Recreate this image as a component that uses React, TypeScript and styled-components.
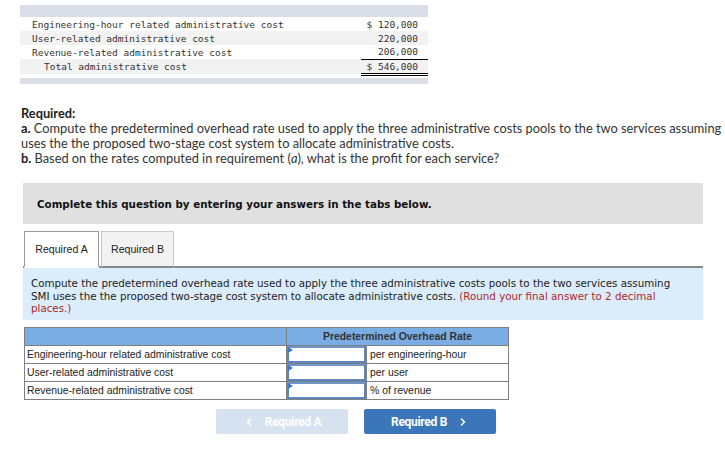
import { createGlobalStyle, styled } from "styled-components";
import { ChevronLeft, ChevronRight } from "lucide-react";

const GlobalStyle = createGlobalStyle`
  html, body {
    margin: 0;
    padding: 0;
    overflow: hidden;
    background: #fff;
  }
`;

const Page = styled.div`
  width: 725px;
  height: 459px;
  overflow: hidden;
  padding-top: 5px;
  box-sizing: border-box;
`;

const CostTable = styled.table`
  margin-left: 20px;
  width: 408px;
  border-collapse: collapse;
  font-family: "DejaVu Sans Mono", "Liberation Mono", monospace;
  font-size: 9.5px;
  color: #333;
`;

const BandRow = styled.tr<{ $h: number }>`
  height: ${(p) => p.$h}px;
  td {
    background: #d9dde6;
    padding: 0;
  }
`;

const SpacerRow = styled.tr`
  height: 4px;
  td {
    padding: 0;
  }
`;

const CostRow = styled.tr<{ $shade?: boolean; $h?: number }>`
  height: ${(p) => p.$h ?? 14}px;
  td {
    background: ${(p) => (p.$shade ? "#f2f2f2" : "#fff")};
    padding: 0;
    white-space: pre;
  }
`;

const LabelCell = styled.td<{ $indent?: boolean }>`
  padding-left: ${(p) => (p.$indent ? 24 : 12)}px !important;
`;

const AmountCell = styled.td<{ $line?: "single" | "double" }>`
  width: 67px;
  text-align: right;
  padding-right: 10px !important;
  box-sizing: border-box;
  border-bottom: ${(p) =>
    p.$line === "single" ? "1px solid #000" : p.$line === "double" ? "3px double #000" : "none"};
`;

const Required = styled.div`
  margin: 22px 0 0 21px;
  font-family: Lato, "Open Sans", sans-serif;
  font-size: 12.8px;
  line-height: 15px;
  color: #333;
`;

const Line = styled.div`
  white-space: nowrap;
`;

const Bold = styled.b`
  font-weight: 700;
  color: #222;
`;

const Section = styled.div`
  margin: 17px 0 0 23px;
  width: 680px;
`;

const Notice = styled.div`
  background: #e0e0e0;
  height: 41px;
  display: flex;
  align-items: center;
  padding-left: 14px;
  font-family: "DejaVu Sans", Verdana, sans-serif;
  font-weight: 700;
  font-size: 10.3px;
  color: #111;
`;

const Tabs = styled.div`
  display: flex;
  gap: 2px;
  margin-top: 7px;
  border-bottom: 2px solid #8a8a8a;
  padding-left: 1px;
`;

const Tab = styled.div<{ $active?: boolean }>`
  width: ${(p) => (p.$active ? 75 : 73)}px;
  height: 37px;
  margin-bottom: -2px;
  box-sizing: border-box;
  display: flex;
  align-items: center;
  justify-content: center;
  font-family: "Liberation Sans", Arial, sans-serif;
  font-size: 10.6px;
  color: #222;
  background: ${(p) => (p.$active ? "#fff" : "#f2f2f2")};
  border: 1px solid ${(p) => (p.$active ? "#9a9a9a" : "#c8c8c8")};
  border-bottom: ${(p) => (p.$active ? "2px solid #fff" : "2px solid #8a8a8a")};
`;

const Info = styled.div`
  background: #dbedfa;
  padding: 9px 20px 7px 8px;
  font-family: "DejaVu Sans", Verdana, sans-serif;
  font-size: 10.3px;
  line-height: 12.5px;
  color: #222;
  height: 52px;
  box-sizing: border-box;
`;

const Hint = styled.span`
  color: #b0262c;
`;

const RateTable = styled.table`
  margin: 7px 0 0 1px;
  width: 485px;
  border-collapse: collapse;
  font-family: "Liberation Sans", Arial, sans-serif;
  font-size: 10.4px;
  color: #222;
  td,
  th {
    border: 1px solid #7f7f7f;
    padding: 0;
  }
`;

const HeadRow = styled.tr`
  height: 18px;
  th {
    background: #7aade4;
    font-weight: 700;
    color: #333;
  }
`;

const BodyRow = styled.tr`
  height: 18px;
`;

const NameCell = styled.td`
  width: 259px;
  padding-left: 2px !important;
`;

const UnitCell = styled.td`
  padding-left: 3px !important;
`;

const InputCell = styled.td`
  width: 79px;
`;

const AnswerBox = styled.div`
  position: relative;
  height: 17px;
  box-sizing: border-box;
  border: 2px solid #5a86bd;
  border-top-color: #6d95c6;
  background: #fff;
  &::before {
    content: "";
    position: absolute;
    top: -1px;
    left: -1px;
    border-top: 3px solid transparent;
    border-bottom: 3px solid transparent;
    border-left: 5px solid #3c78c8;
  }
`;

const Nav = styled.div`
  display: flex;
  gap: 16px;
  margin: 9px 0 0 193px;
`;

const NavButton = styled.div<{ $primary?: boolean }>`
  width: 132px;
  height: 25px;
  border-radius: 2px;
  display: flex;
  align-items: center;
  justify-content: center;
  gap: 10px;
  font-family: Roboto, "Liberation Sans", sans-serif;
  font-weight: 700;
  font-size: 12px;
  letter-spacing: -0.3px;
  color: #fff;
  background: ${(p) => (p.$primary ? "#3b76bb" : "#d6e2f0")};
`;

const costs = [
  { label: "Engineering-hour related administrative cost", amount: "$ 120,000" },
  { label: "User-related administrative cost", amount: "220,000" },
  { label: "Revenue-related administrative cost", amount: "206,000", line: "single" as const },
];

const rates = [
  { label: "Engineering-hour related administrative cost", unit: "per engineering-hour" },
  { label: "User-related administrative cost", unit: "per user" },
  { label: "Revenue-related administrative cost", unit: "% of revenue" },
];

export default function App() {
  return (
    <Page>
      <GlobalStyle />
      <CostTable>
        <tbody>
          <BandRow $h={12}>
            <td colSpan={2} />
          </BandRow>
          {costs.map((c, i) => (
            <CostRow key={c.label} $shade={i % 2 === 1}>
              <LabelCell>{c.label}</LabelCell>
              <AmountCell $line={c.line}>{c.amount}</AmountCell>
            </CostRow>
          ))}
          <CostRow $shade $h={15}>
            <LabelCell $indent>Total administrative cost</LabelCell>
            <AmountCell $line="double">$ 546,000</AmountCell>
          </CostRow>
          <SpacerRow>
            <td colSpan={2} />
          </SpacerRow>
          <BandRow $h={6}>
            <td colSpan={2} />
          </BandRow>
        </tbody>
      </CostTable>

      <Required>
        <Line>
          <Bold>Required:</Bold>
        </Line>
        <Line>
          <Bold>a.</Bold> Compute the predetermined overhead rate used to apply the three
          administrative costs pools to the two services assuming SMI
        </Line>
        <Line>uses the the proposed two-stage cost system to allocate administrative costs.</Line>
        <Line>
          <Bold>b.</Bold> Based on the rates computed in requirement (<i>a</i>), what is the
          profit for each service?
        </Line>
      </Required>

      <Section>
        <Notice>Complete this question by entering your answers in the tabs below.</Notice>
        <Tabs>
          <Tab $active>Required A</Tab>
          <Tab>Required B</Tab>
        </Tabs>
        <Info>
          Compute the predetermined overhead rate used to apply the three administrative costs
          pools to the two services assuming SMI uses the the proposed two-stage cost system to
          allocate administrative costs.{" "}
          <Hint>(Round your final answer to 2 decimal places.)</Hint>
        </Info>
        <RateTable>
          <thead>
            <HeadRow>
              <th />
              <th colSpan={2}>Predetermined Overhead Rate</th>
            </HeadRow>
          </thead>
          <tbody>
            {rates.map((r) => (
              <BodyRow key={r.label}>
                <NameCell>{r.label}</NameCell>
                <InputCell>
                  <AnswerBox />
                </InputCell>
                <UnitCell>{r.unit}</UnitCell>
              </BodyRow>
            ))}
          </tbody>
        </RateTable>
        <Nav>
          <NavButton>
            <ChevronLeft size={12} strokeWidth={3} />
            Required A
          </NavButton>
          <NavButton $primary>
            Required B
            <ChevronRight size={12} strokeWidth={3} />
          </NavButton>
        </Nav>
      </Section>
    </Page>
  );
}
